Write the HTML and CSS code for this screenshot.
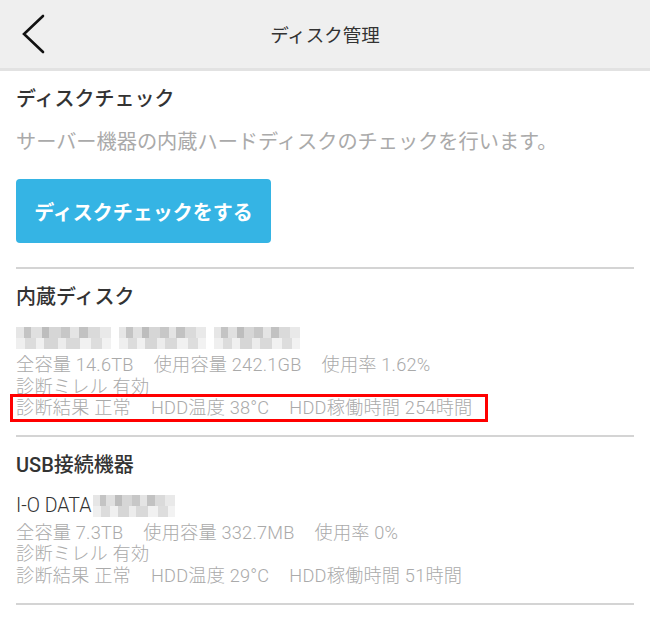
FILE: index.html
```html
<!DOCTYPE html>
<html lang="ja">
<head>
    <meta charset="UTF-8">
    <meta name="viewport" content="width=device-width, initial-scale=1.0">
    <title>ディスク管理</title>
    <link rel="stylesheet" href="styles.css">
</head>
<body>
    <header class="appbar">
        <a class="back" href="#" aria-label="戻る">
            <svg width="30" height="44" viewBox="0 0 30 44">
                <polyline points="25,4 6,22 25,40" fill="none" stroke="#111" stroke-width="2.6" stroke-linecap="round" stroke-linejoin="miter"/>
            </svg>
        </a>
        <h1>ディスク管理</h1>
    </header>

    <main class="content">
        <section class="section">
            <h2>ディスクチェック</h2>
            <p class="desc">サーバー機器の内蔵ハードディスクのチェックを行います。</p>
            <button class="btn">ディスクチェックをする</button>
        </section>

        <section class="section">
            <h2>内蔵ディスク</h2>
            <div class="device">
                <span class="mosaic m1"></span><span class="mosaic m2"></span><span class="mosaic m3"></span>
            </div>
            <div class="info">
                <div class="row">全容量 14.6TB<span class="gap"></span>使用容量 242.1GB<span class="gap"></span>使用率 1.62%</div>
                <div class="row">診断ミレル 有効</div>
                <div class="row marked">診断結果 正常<span class="gap"></span>HDD温度 38°C<span class="gap"></span>HDD稼働時間 254時間</div>
            </div>
        </section>

        <section class="section last">
            <h2>USB接続機器</h2>
            <div class="device">I-O DATA<span class="mosaic m4"></span></div>
            <div class="info">
                <div class="row">全容量 7.3TB<span class="gap"></span>使用容量 332.7MB<span class="gap"></span>使用率 0%</div>
                <div class="row">診断ミレル 有効</div>
                <div class="row">診断結果 正常<span class="gap"></span>HDD温度 29°C<span class="gap"></span>HDD稼働時間 51時間</div>
            </div>
        </section>
    </main>
</body>
</html>
```

FILE: styles.css
```css
body {
    margin: 0;
    background: #fff;
    font-family: Roboto, "Noto Sans CJK JP", sans-serif;
    color: #333;
}
.appbar {
    height: 68px;
    background: #efefef;
    border-bottom: 3px solid #e2e2e2;
    display: flex;
    align-items: center;
    justify-content: center;
    position: relative;
}
.back {
    position: absolute;
    left: 18px;
    top: 12px;
    display: block;
    height: 44px;
}
.appbar h1 {
    margin: 0;
    font-size: 18.5px;
    font-weight: 400;
    color: #333;
}
.content {
    padding: 0 16px;
}
.section {
    border-bottom: 2px solid #d4d4d4;
    padding: 14px 0 16px;
}
.section:first-child {
    padding-bottom: 24px;
}
.section.last {
    padding-bottom: 17px;
}
h2 {
    margin: 0;
    font-size: 20px;
    line-height: 28px;
    font-weight: 500;
    color: #333;
}
.desc {
    margin: 15px 0 0;
    font-size: 20.2px;
    line-height: 28px;
    color: #aaa;
    white-space: nowrap;
}
.btn {
    margin-top: 23px;
    width: 255px;
    height: 64px;
    border: none;
    border-radius: 4px;
    background: #35b4e4;
    color: #fff;
    font-family: inherit;
    font-size: 20px;
    font-weight: 700;
    padding: 0;
}
.device {
    margin-top: 13px;
    height: 28px;
    display: flex;
    align-items: center;
    font-size: 19.5px;
    font-weight: 300;
    color: #333;
}
.mosaic {
    display: inline-block;
    height: 22px;
    margin-right: 8px;
    background:
        linear-gradient(90deg, #e6e6e6 0 8%, #c4c4c4 8% 16%, #e0e0e0 16% 27%, #bdbdbd 27% 35%, #d6d6d6 35% 47%, #c7c7c7 47% 57%, #e4e4e4 57% 66%, #c2c2c2 66% 76%, #dadada 76% 88%, #e9e9e9 88%) top / 100% 11px no-repeat,
        linear-gradient(90deg, #efefef 0 10%, #dcdcdc 10% 21%, #f0f0f0 21% 30%, #d6d6d6 30% 44%, #ececec 44% 53%, #d9d9d9 53% 67%, #f1f1f1 67% 79%, #dddddd 79% 91%, #f2f2f2 91%) bottom / 100% 11px no-repeat;
}
.m1 { width: 95px; }
.m2 { width: 87px; }
.m3 { width: 86px; }
.m4 { width: 82px; margin-left: 2px; }
.info {
    margin-top: 2px;
    font-size: 18.2px;
    font-weight: 300;
    letter-spacing: 0.2px;
    line-height: 21.5px;
    color: #aaa;
    white-space: nowrap;
}
.gap {
    display: inline-block;
    width: 20px;
}
.marked {
    width: fit-content;
    margin-left: -3px;
    padding: 0 12px 0 3px;
    outline: 3px solid #f00;
}
```
